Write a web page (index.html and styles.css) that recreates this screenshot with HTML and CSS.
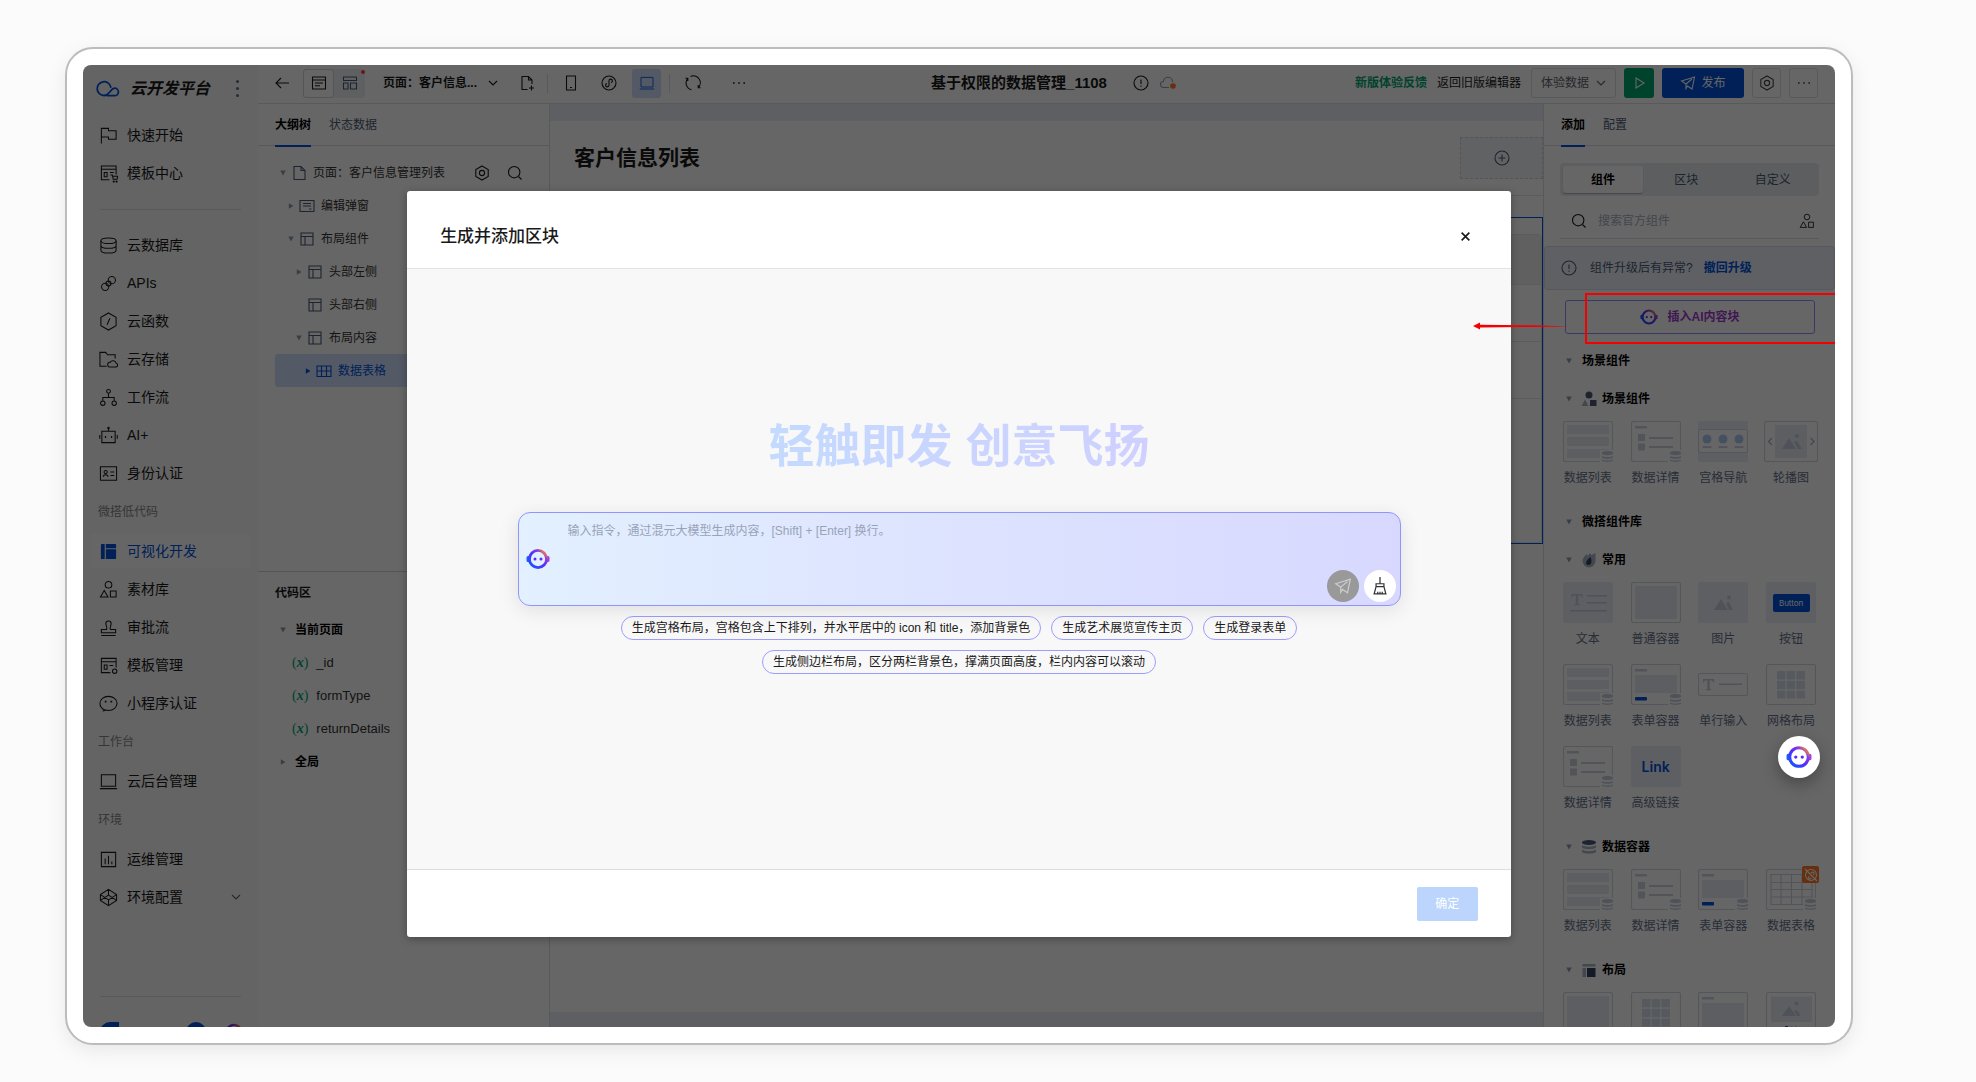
FILE: index.html
```html
<!DOCTYPE html>
<html lang="zh-CN">
<head>
<meta charset="utf-8">
<meta name="viewport" content="width=device-width, initial-scale=1">
<title>云开发平台</title>
<link rel="stylesheet" href="styles.css">
</head>
<body>
<svg class="sprite" width="0" height="0" aria-hidden="true">
  <defs>
    <linearGradient id="bot-g" x1="0" y1="1" x2="1" y2="0">
      <stop offset="0" stop-color="#0a5cff"/><stop offset=".5" stop-color="#5a2bff"/><stop offset=".75" stop-color="#8a3fe0"/><stop offset=".85" stop-color="#e0705a"/><stop offset="1" stop-color="#c04ad0"/>
    </linearGradient>
  </defs>
  <symbol id="bot" viewBox="0 0 24 24"><g stroke="none"><path d="M2 9h2.500v6H2a1.500 1.500 0 0 1-1.500-1.500v-3A1.500 1.500 0 0 1 2 9z" fill="#1f5cff"/><path d="M22 9h-2.500v6H22a1.500 1.500 0 0 0 1.500-1.500v-3A1.500 1.500 0 0 0 22 9z" fill="#a040e0"/><circle cx="9" cy="12" r="1.500" fill="#5a2bff"/><circle cx="15" cy="12" r="1.500" fill="#5a2bff"/></g><circle cx="12" cy="12" r="8.600" fill="none" stroke="url(#bot-g)" stroke-width="2.800"/></symbol>
  <symbol id="logo" viewBox="0 0 24 18"><path d="M14.800 7A6.900 6.900 0 1 0 8 15.500c3 0 4.600-2 6-3.800s2.500-3.500 4.700-3.500a3.700 3.700 0 0 1 0 7.400H11" fill="none" stroke="#0052d9" stroke-width="1.800" stroke-linecap="round"/></symbol>
  <symbol id="flag" viewBox="0 0 20 20"><path d="M2.500 18.500V2.500h7.500v2.500h8v9h-8V11.500H2.500"/></symbol>
  <symbol id="tpl-cart" viewBox="0 0 20 20"><path d="M11 16.500H2.500V2h15.500v9M2.500 5.500H18M5.500 9h3v4.500h-3zM11.500 9h4M12 11.500h2l1 4.500h4l.8-3h-5.500"/><circle cx="15.500" cy="18.500" r=".6"/><circle cx="18.500" cy="18.500" r=".6"/></symbol>
  <symbol id="db" viewBox="0 0 20 20"><ellipse cx="10" cy="5" rx="8" ry="3"/><path d="M2 5v10c0 1.700 3.600 3 8 3s8-1.300 8-3V5M2 10c0 1.700 3.600 3 8 3s8-1.300 8-3"/></symbol>
  <symbol id="api" viewBox="0 0 20 20"><circle cx="6.500" cy="13.500" r="3.800"/><circle cx="13.500" cy="6.500" r="3.800"/><circle cx="10" cy="10" r="2.600"/></symbol>
  <symbol id="fn" viewBox="0 0 20 20"><path d="M10 1l8 4.500v9L10 19l-8-4.500v-9zM11.500 6.500l-3 7"/></symbol>
  <symbol id="store" viewBox="0 0 20 20"><path d="M8 17H1V2.500h6L9 5h8v4M11.500 18a2.500 2.500 0 0 1 .2-5 3.500 3.500 0 0 1 6.300.8 2.200 2.200 0 0 1 0 4.200z"/></symbol>
  <symbol id="flow" viewBox="0 0 20 20"><circle cx="10" cy="3.500" r="2"/><circle cx="4" cy="16" r="2.300"/><circle cx="16" cy="16" r="2.300"/><path d="M10 5.500V10M4 13.500V10h12v3.500"/></symbol>
  <symbol id="robot" viewBox="0 0 20 20"><path d="M3 5.500h14v12H3zM10 5.500v-3M.8 9.500v4M19.200 9.500v4"/><circle cx="10" cy="2.200" r=".8"/><path d="M6.800 10.500v2M13.200 10.500v2M6.200 11.500h1.400M12.600 11.500h1.400"/></symbol>
  <symbol id="idcard" viewBox="0 0 20 20"><path d="M1.500 3h17v14h-17zM4.500 13.500c0-3 5-3 5 0M12 8.500h4M12 12h4"/><circle cx="7" cy="8.500" r="1.700"/></symbol>
  <symbol id="shapes" viewBox="0 0 20 20"><circle cx="10" cy="5" r="3.500"/><path d="M5.500 11l4 7h-8zM12 11.500h6v6.500h-6z"/></symbol>
  <symbol id="stamp" viewBox="0 0 20 20"><path d="M2.500 18.500h15M2.500 15.500v-3.500h5.500c1-2-.8-4-.8-6a2.800 2.800 0 0 1 5.600 0c0 2-1.800 4-.8 6h5.500v3.500z"/></symbol>
  <symbol id="tpl" viewBox="0 0 20 20"><path d="M12 17.500H2.500V2.500h15.500V12M2.500 6H18M5.500 9.500h3V14h-3zM11 10h4"/><circle cx="16.500" cy="16" r="2.300"/></symbol>
  <symbol id="mini" viewBox="0 0 20 20"><path d="M4 18c1 0 1.700-.5 2-1.200-3-1.200-5-4-5-7C1 5.500 5 2.500 10 2.500s9 3.200 9 7.300-4 7.500-9 7.500c-1 0-2-.1-3-.4z"/><path d="M7 7v2M13 7v2" stroke-width="1.800"/></symbol>
  <symbol id="laptop" viewBox="0 0 20 20"><path d="M2.500 3h15v12h-15zM1 17.500h18"/></symbol>
  <symbol id="chart" viewBox="0 0 20 20"><path d="M2.500 2.500h15v15h-15zM6.500 9v6M10 6v9M13.500 12v3"/></symbol>
  <symbol id="cube" viewBox="0 0 20 20"><path d="M10 1.500l8.500 5.500v6L10 18.500 1.500 13V7zM1.500 7L10 12.500 18.500 7M1.500 13L10 7.500l8.500 5.500M10 1.500v6M10 12.500v6"/></symbol>
  <symbol id="grid-fill" viewBox="0 0 20 20"><path d="M3 2h3v16H3a1 1 0 0 1-1-1V3a1 1 0 0 1 1-1zM7.200 2H17a1 1 0 0 1 1 1v3.500H7.200zM7.200 7.700H18V17a1 1 0 0 1-1 1H7.200z" fill="currentColor" stroke="none"/></symbol>
  <symbol id="chev" viewBox="0 0 10 10"><path d="M1 3l4 4 4-4"/></symbol>
  <symbol id="back" viewBox="0 0 16 16"><path d="M15 8H1.500M7 3L2 8l5 5"/></symbol>
  <symbol id="doc" viewBox="0 0 16 16"><path d="M3 1.500h7l4 4v9H3zM10 1.500v4h4"/></symbol>
  <symbol id="doc-add" viewBox="0 0 16 16"><path d="M8.500 14.500H3v-13h6.500L13 5v4M9.500 1.500V5H13M12.500 10.500v5M10 13h5"/></symbol>
  <symbol id="form" viewBox="0 0 16 16"><path d="M1.500 2h13v12h-13zM1.500 5h13M4 8h8M4 10.800h5"/></symbol>
  <symbol id="blocks" viewBox="0 0 16 16"><path d="M1.500 2h13v3.500h-13zM1.500 8h4.500v6H1.500zM8.500 8h6v6h-6z"/></symbol>
  <symbol id="phone" viewBox="0 0 16 16"><path d="M3.500 1h9v14h-9zM7 12.500h2"/></symbol>
  <symbol id="wxmini" viewBox="0 0 16 16"><circle cx="8" cy="8" r="7"/><path d="M6 8.500a1.700 1.700 0 1 0 2 1.700V5.800A1.700 1.700 0 1 1 10 7.500"/></symbol>
  <symbol id="refresh" viewBox="0 0 16 16"><path d="M2.800 3.400A6.900 6.900 0 0 0 6.500 14.700M5.500 1.500A6.900 6.900 0 0 1 13.400 12.500M2.800 6V3.200H.5M13.200 10v2.800h2.300"/></symbol>
  <symbol id="dots" viewBox="0 0 16 16"><path d="M2 7.200h1.600v1.600H2zM7.200 7.200h1.600v1.600H7.200zM12.400 7.200H14v1.600h-1.600z" fill="currentColor" stroke="none"/></symbol>
  <symbol id="info" viewBox="0 0 16 16"><circle cx="8" cy="8" r="7"/><path d="M8 4.500v4.500M8 10.500v1.200"/></symbol>
  <symbol id="cloud" viewBox="0 0 18 16"><path d="M10 12.500H4.500a3 3 0 0 1 0-6 4.500 4.500 0 0 1 9 .5" /><circle cx="14" cy="11" r="2.800" fill="#ff7828" stroke="none"/></symbol>
  <symbol id="play" viewBox="0 0 16 16"><path d="M5 3l8 5-8 5z"/></symbol>
  <symbol id="send" viewBox="0 0 16 16"><path d="M1.500 6L14.500 2l-2.500 12-4.500-3-1.500 2.500V9zM6 9l6-5"/></symbol>
  <symbol id="hex" viewBox="0 0 16 16"><path d="M8 1l6.200 3.500v7L8 15l-6.200-3.500v-7z"/><circle cx="8" cy="8" r="2.600"/></symbol>
  <symbol id="search" viewBox="0 0 16 16"><circle cx="7.200" cy="7.200" r="5.700"/><path d="M11.500 11.500l3 3"/></symbol>
  <symbol id="plus-c" viewBox="0 0 16 16"><circle cx="8" cy="8" r="7"/><path d="M8 4.500v7M4.500 8h7"/></symbol>
  <symbol id="dialog" viewBox="0 0 16 16"><path d="M1 2.500h14v11H1zM4 5.500h8M4 8h8M10 11h2.500"/></symbol>
  <symbol id="layout" viewBox="0 0 16 16"><path d="M2 2h12v12H2zM2 5.500h12M6 5.500V14"/></symbol>
  <symbol id="table" viewBox="0 0 16 16"><path d="M1 3h14v10.500H1zM1 8h14M5.500 3v10.500M10.500 3v10.500"/></symbol>
  <symbol id="down" viewBox="0 0 8 8"><path d="M1.200 1.500h5.600L4 6.500z" fill="#8f9bb0" stroke="none"/></symbol>
  <symbol id="right" viewBox="0 0 8 8"><path d="M1.800 1.200v5.600L6.500 4z" fill="#8f9bb0" stroke="none"/></symbol>
  <symbol id="right-on" viewBox="0 0 8 8"><path d="M1.800 1.200v5.600L6.500 4z" fill="#0052d9" stroke="none"/></symbol>
  <symbol id="x" viewBox="0 0 10 10"><path d="M1.500 1.500l7 7M8.500 1.500l-7 7"/></symbol>
  <symbol id="broom" viewBox="0 0 16 16"><path d="M8 0v6M4.500 6h7v2.500h-7zM4.500 8.500L2.800 15h10.400l-1.700-6.500M6 15v-2M8 15v-2M10 15v-2"/></symbol>
  <symbol id="c-scene" viewBox="0 0 16 16"><circle cx="8" cy="4" r="3.500" fill="#4a5a78"/><path d="M4 8.500L7.500 15H.5z" fill="#a9b4c6"/><path d="M9 9h6.500v6H9z" fill="#4a5a78"/></symbol>
  <symbol id="c-hot" viewBox="0 0 16 16"><path d="M14.500 1v8a6.500 6.500 0 1 1-13 0C1.500 6 4 4 5.500 2l1 2L9 1l1.500 2z" fill="#a9b4c6"/><path d="M9.500 5C11 8 11 13 7.500 13S4 9 9.500 5z" fill="#33415f"/></symbol>
  <symbol id="c-data" viewBox="0 0 16 16"><ellipse cx="8" cy="3.500" rx="7" ry="2.500" fill="#4a5a78"/><path d="M1 6c2 2.200 12 2.200 14 0v2.500c-2 2.200-12 2.200-14 0zM1 10.500c2 2.200 12 2.200 14 0V13c-2 2.200-12 2.200-14 0z" fill="#a9b4c6"/></symbol>
  <symbol id="c-layout" viewBox="0 0 16 16"><path d="M1.500 2h13v2.500h-13zM1.500 6H5v9H1.500z" fill="#a9b4c6"/><path d="M6 6h8.500v9H6z" fill="#33415f"/></symbol>

  <symbol id="t-db" viewBox="0 0 50 41"><path d="M37 29h14v13H37z" fill="#fff"/><path d="M39 31.500c0-2 11-2 11 0v1.500c-2 1.500-9 1.500-11 0zM39 35c2 1.300 9 1.300 11 0v1.800c-2 1.400-9 1.400-11 0zM39 38.500c2 1.300 9 1.300 11 0v1.300c-2 1.500-9 1.500-11 0z" fill="#c6cedb"/></symbol>
  <symbol id="t-box" viewBox="0 0 50 41"><rect x=".5" y=".5" width="49" height="40" rx="2" fill="#fff" stroke="#d3d8e0"/></symbol>
  <symbol id="t-list" viewBox="0 0 50 41"><use href="#t-box"/><path d="M4 4h42v9H4zM4 16h42v9H4zM4 28h42v9H4z" fill="#e8ecf2"/><use href="#t-db"/></symbol>
  <symbol id="t-detail" viewBox="0 0 50 41"><use href="#t-box"/><path d="M4 5h12v2.500H4zM7 13h7v7H7zM7 22.500h7v7H7zM18 16h24v2H18zM18 25h24v2H18z" fill="#ccd3e0"/><use href="#t-db"/></symbol>
  <symbol id="t-nav" viewBox="0 0 50 41"><rect width="50" height="41" rx="2" fill="#e9edf4"/><rect x=".5" y="8.500" width="49" height="23" rx="2" fill="#fff" stroke="#d3d8e0"/><g fill="#a9cbf8"><circle cx="9" cy="18" r="4.500"/><circle cx="25" cy="18" r="4.500"/><circle cx="41" cy="18" r="4.500"/></g><path d="M4.500 25h9v2h-9zM20.500 25h9v2h-9zM36.500 25h9v2h-9z" fill="#ccd3e0"/></symbol>
  <symbol id="t-swipe" viewBox="0 0 54 41"><rect x=".5" y=".5" width="53" height="40" rx="2" fill="#fff" stroke="#d3d8e0"/><path d="M11 4h32v33H11z" fill="#e8ecf2"/><path d="M18 28l7-11 7 11zM30 21l3-1 5 8h-4z" fill="#c6cedb"/><circle cx="33" cy="15" r="2" fill="#c6cedb"/><path d="M8 17l-3.500 3.500L8 24M46.500 17l3.500 3.500-3.500 3.500" fill="none" stroke="#a9b4c6" stroke-width="1.300"/></symbol>
  <symbol id="t-text" viewBox="0 0 50 41"><rect width="50" height="41" rx="2" fill="#e9edf4"/><path d="M8.500 12h11v3.500h-1c0-1.500-.8-2.300-3.300-2.300V22h1.500v1.200h-5.400V22h1.500v-8.800c-2.500 0-3.300.8-3.300 2.300h-1zM24 13h20v1.600H24zM24 20h20v1.600H24zM7 28h37v1.600H7z" fill="#c6cedb"/></symbol>
  <symbol id="t-cont" viewBox="0 0 50 41"><use href="#t-box"/><path d="M4 4h42v33H4z" fill="#e8ecf2"/></symbol>
  <symbol id="t-img" viewBox="0 0 50 41"><rect width="50" height="41" rx="2" fill="#e9edf4"/><path d="M16 28l7-11 7 11zM28 21l3-1 4 8h-4z" fill="#c6cedb"/><circle cx="31" cy="15.500" r="2" fill="#c6cedb"/></symbol>
  <symbol id="t-form" viewBox="0 0 50 41"><use href="#t-box"/><path d="M4 5h12v2.500H4z" fill="#ccd3e0"/><path d="M4 11h42v18H4z" fill="#e8ecf2"/><rect x="4" y="33" width="12" height="3.500" rx="1" fill="#0052d9"/><use href="#t-db"/></symbol>
  <symbol id="t-input" viewBox="0 0 50 41"><rect x=".5" y="9.500" width="49" height="22" rx="2" fill="#fff" stroke="#d3d8e0"/><path d="M5 15h11v3.500h-1c0-1.500-.8-2.300-3.300-2.300V25h1.500v1.200H7.800V25h1.500v-8.800c-2.500 0-3.300.8-3.300 2.300H5zM21 19.500h23v1.600H21z" fill="#c6cedb"/></symbol>
  <symbol id="t-grid" viewBox="0 0 50 41"><use href="#t-box"/><path d="M11 7h8.500v8.500H11zM20.700 7h8.500v8.500h-8.500zM30.400 7h8.500v8.500h-8.500zM11 16.700h8.500v8.500H11zM20.700 16.700h8.500v8.500h-8.500zM30.400 16.700h8.500v8.500h-8.500zM11 26.400h8.500v8H11zM20.700 26.400h8.500v8h-8.500zM30.400 26.400h8.500v8h-8.500z" fill="#d7dfea"/></symbol>
  <symbol id="t-table" viewBox="0 0 50 41"><use href="#t-box"/><path d="M5 5.500h41v30H5zM5 13.500h41M5 20.500h41M5 28h41M15 5.500v30M25.500 5.500v30M36 5.500v30" fill="none" stroke="#ccd3e0"/><use href="#t-db"/></symbol>
  <symbol id="t-card" viewBox="0 0 50 41"><use href="#t-box"/><path d="M4 5h12v2.500H4z" fill="#ccd3e0"/><path d="M4 11h42v30H4z" fill="#e8ecf2"/></symbol>
  <symbol id="t-banner" viewBox="0 0 50 41"><use href="#t-box"/><path d="M5 4.500h41V30H5z" fill="#e8ecf2"/><path d="M16 24l7-10 7 10zM28 19l3-1 4 6h-4z" fill="#c6cedb"/><circle cx="30.500" cy="11.500" r="2" fill="#c6cedb"/><path d="M19 34h3v3h-3z" fill="#0052d9"/><path d="M24.500 34h2v2h-2zM29 34h2v2h-2z" fill="#ccd3e0"/></symbol>
</svg>

<div class="frame">
<div class="screen">

  <nav class="side">
    <div class="brand"><svg class="logo"><use href="#logo"/></svg><strong>云开发平台</strong><button class="kebab" aria-label="更多"><i></i><i></i><i></i></button></div>
    <a class="nav" href="#"><svg><use href="#flag"/></svg>快速开始</a>
    <a class="nav" href="#"><svg><use href="#tpl-cart"/></svg>模板中心</a>
    <hr>
    <a class="nav" href="#"><svg><use href="#db"/></svg>云数据库</a>
    <a class="nav" href="#"><svg><use href="#api"/></svg>APIs</a>
    <a class="nav" href="#"><svg><use href="#fn"/></svg>云函数</a>
    <a class="nav" href="#"><svg><use href="#store"/></svg>云存储</a>
    <a class="nav" href="#"><svg><use href="#flow"/></svg>工作流</a>
    <a class="nav" href="#"><svg><use href="#robot"/></svg>AI+</a>
    <a class="nav" href="#"><svg><use href="#idcard"/></svg>身份认证</a>
    <div class="group">微搭低代码</div>
    <a class="nav on" href="#"><svg><use href="#grid-fill"/></svg>可视化开发</a>
    <a class="nav" href="#"><svg><use href="#shapes"/></svg>素材库</a>
    <a class="nav" href="#"><svg><use href="#stamp"/></svg>审批流</a>
    <a class="nav" href="#"><svg><use href="#tpl"/></svg>模板管理</a>
    <a class="nav" href="#"><svg><use href="#mini"/></svg>小程序认证</a>
    <div class="group">工作台</div>
    <a class="nav" href="#"><svg><use href="#laptop"/></svg>云后台管理</a>
    <div class="group">环境</div>
    <a class="nav" href="#"><svg><use href="#chart"/></svg>运维管理</a>
    <a class="nav" href="#"><svg><use href="#cube"/></svg>环境配置<svg class="more"><use href="#chev"/></svg></a>
    <div class="side-foot"><span class="leaf"></span><span class="ball"></span><svg><use href="#bot"/></svg></div>
  </nav>

  <div class="main">
    <header class="top">
      <div class="tools">
        <button class="plain" aria-label="返回"><svg><use href="#back"/></svg></button>
        <div class="views"><button class="on" aria-label="编辑视图"><svg><use href="#form"/></svg></button><button aria-label="布局视图"><svg><use href="#blocks"/></svg></button></div>
        <button class="page-pick">页面：客户信息...<svg class="tiny"><use href="#chev"/></svg></button>
        <button class="plain" aria-label="新建页面"><svg><use href="#doc-add"/></svg></button>
        <span class="bar"></span>
        <button class="device" aria-label="手机"><svg><use href="#phone"/></svg></button>
        <button class="device" aria-label="小程序"><svg><use href="#wxmini"/></svg></button>
        <button class="device on" aria-label="电脑"><svg><use href="#laptop"/></svg></button>
        <span class="bar"></span>
        <button class="device" aria-label="刷新"><svg><use href="#refresh"/></svg></button>
        <button class="device wide" aria-label="更多"><svg><use href="#dots"/></svg></button>
      </div>
      <div class="app-name"><strong>基于权限的数据管理_1108</strong><svg><use href="#info"/></svg><svg class="cloud"><use href="#cloud"/></svg></div>
      <div class="acts">
        <a class="green" href="#">新版体验反馈</a><a href="#">返回旧版编辑器</a>
        <button class="sel">体验数据<svg class="tiny"><use href="#chev"/></svg></button>
        <button class="run" aria-label="预览"><svg><use href="#play"/></svg></button>
        <button class="publish"><svg><use href="#send"/></svg>发布</button>
        <button class="sq" aria-label="设置"><svg><use href="#hex"/></svg></button>
        <button class="sq" aria-label="更多"><svg><use href="#dots"/></svg></button>
      </div>
    </header>

    <div class="work">
      <aside class="outline">
        <div class="tabs"><button class="on">大纲树</button><button>状态数据</button></div>
        <div class="tree">
          <div class="row"><svg class="tri"><use href="#down"/></svg><svg><use href="#doc"/></svg>页面：客户信息管理列表<span class="row-tools"><svg><use href="#hex"/></svg><svg><use href="#search"/></svg></span></div>
          <div class="row l1"><svg class="tri"><use href="#right"/></svg><svg><use href="#dialog"/></svg>编辑弹窗</div>
          <div class="row l1"><svg class="tri"><use href="#down"/></svg><svg><use href="#layout"/></svg>布局组件</div>
          <div class="row l2"><svg class="tri"><use href="#right"/></svg><svg><use href="#layout"/></svg>头部左侧</div>
          <div class="row l2"><svg class="tri"></svg><svg><use href="#layout"/></svg>头部右侧</div>
          <div class="row l2"><svg class="tri"><use href="#down"/></svg><svg><use href="#layout"/></svg>布局内容</div>
          <div class="row l3 on"><svg class="tri"><use href="#right-on"/></svg><svg><use href="#table"/></svg>数据表格</div>
        </div>
        <div class="code">
          <h2>代码区</h2>
          <div class="row head"><svg class="tri"><use href="#down"/></svg>当前页面</div>
          <div class="row var"><i>(<em>x</em>)</i>_id</div>
          <div class="row var"><i>(<em>x</em>)</i>formType</div>
          <div class="row var"><i>(<em>x</em>)</i>returnDetails</div>
          <div class="row head"><svg class="tri"><use href="#right"/></svg>全局</div>
        </div>
      </aside>

      <main class="canvas">
        <div class="sheet">
          <div class="sheet-head"><h1>客户信息列表</h1><button class="slot" aria-label="添加组件"><svg><use href="#plus-c"/></svg></button></div>
          <div class="picked"><div class="grid-view"><div class="gh"></div><div class="gr"></div><div class="gr"></div></div></div>
        </div>
      </main>

      <aside class="lib">
        <div class="tabs"><button class="on">添加</button><button>配置</button></div>
        <div class="seg"><button class="on">组件</button><button>区块</button><button>自定义</button></div>
        <label class="find"><svg><use href="#search"/></svg><input type="text" placeholder="搜索官方组件" aria-label="搜索官方组件"><svg><use href="#shapes"/></svg></label>
        <div class="tip"><svg><use href="#info"/></svg>组件升级后有异常?<a href="#">撤回升级</a></div>
        <button class="ai-add"><svg><use href="#bot"/></svg><span>插入AI内容块</span></button>

        <h3><svg class="tri"><use href="#down"/></svg>场景组件</h3>
        <h3><svg class="tri"><use href="#down"/></svg><svg class="cat"><use href="#c-scene"/></svg>场景组件</h3>
        <div class="cells">
          <div><svg><use href="#t-list"/></svg>数据列表</div>
          <div><svg><use href="#t-detail"/></svg>数据详情</div>
          <div><svg><use href="#t-nav"/></svg>宫格导航</div>
          <div><svg class="broad"><use href="#t-swipe"/></svg>轮播图</div>
        </div>
        <h3><svg class="tri"><use href="#down"/></svg>微搭组件库</h3>
        <h3><svg class="tri"><use href="#down"/></svg><svg class="cat"><use href="#c-hot"/></svg>常用</h3>
        <div class="cells">
          <div><svg><use href="#t-text"/></svg>文本</div>
          <div><svg><use href="#t-cont"/></svg>普通容器</div>
          <div><svg><use href="#t-img"/></svg>图片</div>
          <div><span class="demo"><b>Button</b></span>按钮</div>
          <div><svg><use href="#t-list"/></svg>数据列表</div>
          <div><svg><use href="#t-form"/></svg>表单容器</div>
          <div><svg><use href="#t-input"/></svg>单行输入</div>
          <div><svg><use href="#t-grid"/></svg>网格布局</div>
          <div><svg><use href="#t-detail"/></svg>数据详情</div>
          <div><span class="demo link">Link</span>高级链接</div>
        </div>
        <h3><svg class="tri"><use href="#down"/></svg><svg class="cat"><use href="#c-data"/></svg>数据容器</h3>
        <div class="cells">
          <div><svg><use href="#t-list"/></svg>数据列表</div>
          <div><svg><use href="#t-detail"/></svg>数据详情</div>
          <div><svg><use href="#t-form"/></svg>表单容器</div>
          <div class="tagged"><svg><use href="#t-table"/></svg>数据表格<span class="tag"><svg viewBox="0 0 16 16"><circle cx="8" cy="8" r="5.500"/><path d="M2 2l12 12M6.500 9.500a1.300 1.300 0 1 0 1.500 1M8 6.500a1.500 1.500 0 1 1 2 1.500"/></svg></span></div>
        </div>
        <h3><svg class="tri"><use href="#down"/></svg><svg class="cat"><use href="#c-layout"/></svg>布局</h3>
        <div class="cells">
          <div><svg><use href="#t-cont"/></svg></div>
          <div><svg><use href="#t-grid"/></svg></div>
          <div><svg><use href="#t-card"/></svg></div>
          <div><svg><use href="#t-banner"/></svg></div>
        </div>
      </aside>
    </div>
  </div>

  <div class="mask">
    <section class="modal" role="dialog" aria-labelledby="dlg-title">
      <header><h2 id="dlg-title">生成并添加区块</h2><button aria-label="关闭"><svg><use href="#x"/></svg></button></header>
      <div class="modal-body">
        <p class="slogan">轻触即发 创意飞扬</p>
        <div class="prompt">
          <svg class="bot"><use href="#bot"/></svg>
          <textarea aria-label="输入指令" placeholder="输入指令，通过混元大模型生成内容，[Shift] + [Enter] 换行。"></textarea>
          <div class="prompt-acts"><button class="send" aria-label="发送"><svg><use href="#send"/></svg></button><button aria-label="清空"><svg><use href="#broom"/></svg></button></div>
        </div>
        <div class="pills">
          <button>生成宫格布局，宫格包含上下排列，并水平居中的 icon 和 title，添加背景色</button>
          <button>生成艺术展览宣传主页</button>
          <button>生成登录表单</button>
          <button>生成侧边栏布局，区分两栏背景色，撑满页面高度，栏内内容可以滚动</button>
        </div>
      </div>
      <footer><button disabled>确定</button></footer>
    </section>
  </div>

  <div class="mark"></div>
  <svg class="arrow" viewBox="0 0 100 10"><path d="M0 5L7 1.500V3.800L60 4.200 98 5.600 60 6 7 6.500V8.500z" fill="#f50000"/></svg>
  <button class="fab" aria-label="AI 助手"><svg><use href="#bot"/></svg></button>
</div>
</div>
</body>
</html>
```
FILE: styles.css
```css
* { box-sizing: border-box; }
body {
  margin: 0;
  height: 100vh;
  min-height: 640px;
  display: flex;
  padding: 47px 123px 37px 65px;
  background: #fbfbfb;
  color: #1a1a1a;
  font: 12px/20px "Liberation Sans", "Noto Sans CJK SC", sans-serif;
}
button, input, textarea { font: inherit; color: inherit; }
button { border: 0; padding: 0; background: none; display: inline-flex; align-items: center; justify-content: center; white-space: nowrap; }
a { color: inherit; text-decoration: none; }
h1, h2, h3, p { margin: 0; font-size: inherit; font-weight: bold; }
svg { width: 16px; height: 16px; flex: none; fill: none; stroke: currentColor; stroke-width: 1.1; }
.sprite { position: absolute; width: 0; height: 0; }

.frame {
  flex: 1;
  min-width: 0;
  display: flex;
  padding: 16px;
  border: 2px solid #bcbcbc;
  border-radius: 28px;
  background: #fff;
  box-shadow: 0 6px 20px rgba(0, 0, 0, .08);
}
.screen { position: relative; flex: 1; min-width: 0; display: flex; overflow: hidden; border-radius: 8px; background: #fff; }

/* product navigation */
.side { width: 175px; flex: none; overflow: hidden; background: #f9f9f9; font-size: 14px; }
.brand { display: flex; align-items: center; height: 53px; padding: 0 19px 6px 13px; }
.brand strong { margin-left: 10px; font-size: 16px; font-style: italic; }
.logo { width: 24px; height: 18px; }
.kebab { margin-left: auto; flex-direction: column; gap: 4px; }
.kebab i { width: 3px; height: 3px; border-radius: 50%; background: #63718c; }
.nav { display: flex; align-items: center; gap: 9px; height: 34px; margin: 0 8px 4px; padding-left: 8px; border-radius: 3px; }
.nav svg { width: 19px; height: 19px; }
.nav.on { background: #fff; color: #0052d9; }
.nav .more { width: 10px; height: 10px; margin: 0 9px 0 auto; color: #666; }
.side hr { height: 1px; margin: 19px 17px 18px; border: 0; background: #dedede; }
.group { height: 38px; padding: 8px 15px; margin-bottom: 2px; font-size: 12px; color: #888; }
.side-foot { display: flex; margin: 82px 17px 0; padding-top: 25px; border-top: 1px solid #dedede; }
.side-foot svg { width: 20px; height: 20px; margin-left: 18px; }
.leaf { flex: none; width: 19px; height: 19px; border-radius: 10px 0 10px 0; background: #0052d9; }
.ball { flex: none; width: 20px; height: 20px; margin-left: 67px; border-radius: 50%; background: #0052d9; }

/* editor */
.main { flex: 1; min-width: 0; display: flex; flex-direction: column; }
.top { display: flex; justify-content: space-between; align-items: center; height: 39px; flex: none; padding: 0 17px 2px 15px; border-bottom: 1px solid #dcdfe5; }
.tools, .app-name, .acts { display: flex; align-items: center; }
.plain { width: 17px; height: 29px; }
.views { position: relative; display: flex; margin: 0 18px 0 13px; border-radius: 3px; background: #eef1f6; color: #4b5b76; }
.views button { width: 31px; height: 29px; border: 1px solid transparent; border-radius: 3px; }
.views .on { border-color: #cfd5df; background: #fff; color: #1a1a1a; }
.views::after { content: ""; position: absolute; top: 1px; right: 0; width: 4px; height: 4px; border-radius: 50%; background: #f64041; }
.page-pick { gap: 11px; margin-right: 20px; font-weight: bold; }
.tiny { width: 10px; height: 10px; }
.bar { width: 1px; height: 19px; margin: 0 8px; background: #dcdfe5; }
.plain + .bar { margin-left: 12px; }
.device { width: 29px; height: 29px; margin-right: 9px; border-radius: 3px; }
.device.on { margin-right: 0; background: #cfe0ff; color: #0052d9; }
.device.wide { margin: 0 0 0 8px; }
.app-name strong { margin-right: 26px; font-size: 15px; }
.app-name .cloud { width: 18px; margin-left: 10px; color: #8f9bb0; }
.acts { gap: 8px; }
.green { margin-right: 2px; font-weight: bold; color: #00a870; }
.sel { gap: 7px; width: 85px; height: 30px; margin-left: 2px; border: 1px solid #dcdfe5; border-radius: 3px; color: #63656b; }
.run { width: 30px; height: 30px; border-radius: 3px; background: #00a870; color: #fff; }
.publish { gap: 5px; width: 82px; height: 30px; border-radius: 3px; background: #0052d9; color: #fff; }
.sq { width: 29px; height: 30px; border: 1px solid #dcdfe5; border-radius: 3px; color: #444; }

.work { flex: 1; min-height: 0; display: flex; }
.tabs { display: flex; gap: 18px; height: 42px; flex: none; padding-left: 17px; border-bottom: 1px solid #dcdfe5; }
.tabs button { height: 43px; border-bottom: 2px solid transparent; color: #4b5b76; }
.tabs .on { border-color: #0052d9; color: #000; font-weight: bold; }

.outline { width: 292px; flex: none; display: flex; flex-direction: column; border-right: 1px solid #dcdfe5; }
.tree { flex: 14 0 0; min-height: 0; overflow: hidden; padding: 10px 0 0 17px; }
.row { display: flex; align-items: center; height: 33px; gap: 6px; color: #333; border-radius: 3px 0 0 3px; white-space: nowrap; }
.row svg { color: #4b5b76; }
.row > svg:nth-child(2) { margin-left: -6px; }
.tri { width: 16px; height: 8px; }
.l1 { padding-left: 8px; }
.l2 { padding-left: 16px; }
.l3 { padding-left: 25px; }
.row.on { background: #cfe0ff; color: #0052d9; }
.row.on svg { color: #0052d9; }
.row-tools { display: flex; gap: 17px; margin-left: auto; padding-right: 26px; }
.row-tools svg { color: #1a1a1a; }
.code { flex: 15 0 0; min-height: 0; overflow: hidden; padding: 11px 0 0 17px; border-top: 1px solid #cfd5df; }
.code h2 { margin-bottom: 11px; }
.head { font-weight: bold; color: #000; gap: 4px; }
.var { padding-left: 17px; gap: 8px; font-size: 13px; }
.var i { font: 14px/20px "Liberation Serif", serif; color: #00a870; }
.var em { font-style: italic; font-weight: bold; }

.canvas { flex: 1; min-width: 0; padding: 17px 0 15px; background: #e9eef5; }
.sheet { height: 100%; overflow: hidden; background: #fff; }
.sheet-head { display: flex; justify-content: space-between; align-items: center; height: 75px; padding-left: 24px; border-bottom: 1px solid #e4e6ea; }
.sheet-head h1 { font-size: 21px; line-height: 30px; }
.slot { width: 83px; height: 42px; border: 1px dashed #cfd5df; background: #f2f5fa; color: #4b5b76; }
.picked { height: 327px; margin: 21px 0 0 24px; padding-top: 16px; border: 1px solid #0052d9; }
.grid-view { height: 100%; border: 1px solid #e4e6ea; border-radius: 4px; }
.gh { height: 50px; background: #f1f1f1; }
.gh, .gr { border-bottom: 1px solid #e4e6ea; }
.gr { height: 57px; }

.lib { width: 292px; flex: none; overflow: hidden; border-left: 1px solid #dcdfe5; }
.lib .tabs { padding-left: 17px; }
.seg { display: grid; grid-template-columns: 80px 1fr 1fr; margin: 17px 16px 0; padding: 3px; border-radius: 4px; background: #e6eaf0; color: #4b5b76; }
.seg button { height: 27px; border-radius: 3px; }
.seg .on { background: #fff; color: #000; font-weight: bold; box-shadow: 0 1px 1px rgba(0, 0, 0, .25); }
.find { display: flex; align-items: center; gap: 11px; height: 43px; margin: 0 16px; padding: 7px 4px 0 11px; border-bottom: 1px solid #dcdfe5; }
.find input { flex: 1; min-width: 0; padding: 0; border: 0; outline: 0; background: none; }
.find input::placeholder { color: #a6afc0; opacity: 1; }
.tip { display: flex; align-items: center; height: 44px; margin-top: 7px; padding-left: 16px; border: 1px solid #d5deed; border-radius: 3px; background: #ebf1fb; color: #4b5b76; }
.tip svg { margin-right: 13px; }
.tip a { margin-left: 11px; font-weight: bold; color: #0052d9; }
.ai-add { display: flex; gap: 9px; width: 250px; height: 34px; margin: 10px 0 8px 21px; border: 1px solid #8f90ff; border-radius: 3px; color: #a23bd0; font-weight: bold; }
.ai-add svg { width: 18px; height: 18px; }
.lib h3 { display: flex; align-items: center; height: 38px; padding-left: 17px; gap: 5px; color: #000; }
.cells { display: grid; grid-template-columns: repeat(4, 1fr); row-gap: 15px; padding: 3px 10px 15px; color: #63718c; text-align: center; }
.cells > div { position: relative; display: flex; flex-direction: column; align-items: center; gap: 6px; }
.cells > div > svg { width: 50px; height: 41px; stroke: none; }
.cells > div > .broad { width: 54px; }
.demo { display: grid; place-items: center; width: 50px; height: 41px; border-radius: 2px; background: #e9edf4; }
.demo b { width: 37px; border-radius: 2px; background: #0052d9; color: #fff; font: 8px/18px Inter, sans-serif; }
.link { color: #0052d9; font: 600 14px/20px Inter, sans-serif; }
.tag { position: absolute; top: -3px; right: 6px; display: grid; width: 17px; height: 17px; place-items: center; border-radius: 2px; background: #ff7828; color: #fff; }
.cat { margin-left: -1px; stroke: none; }

/* dialog over the editor */
.mask { position: absolute; inset: 0; display: flex; justify-content: center; align-items: flex-start; padding-top: 126px; background: rgba(0, 0, 0, .6); }
.modal { width: 63%; border-radius: 3px; background: #fff; box-shadow: 0 2px 8px rgba(0, 0, 0, .3); }
.modal header { display: flex; align-items: center; justify-content: space-between; height: 78px; padding: 14px 40px 0 33px; border-bottom: 1px solid #e3e3e3; }
.modal header h2 { font-size: 17px; line-height: 24px; font-weight: 500; }
.modal header svg { width: 11px; height: 11px; stroke-width: 1.5; }
.modal-body { padding: 147px 10% 195px; background: #f8f8f8; border-bottom: 1px solid #dedede; }
.slogan { width: fit-content; margin: 0 auto 36px; font-size: 46px; line-height: 60px; font-weight: bold; color: transparent; background: linear-gradient(90deg, #c4daff, #cfd0ff); -webkit-background-clip: text; background-clip: text; }
.prompt { position: relative; display: flex; align-items: center; height: 94px; padding: 0 12px 0 7px; border: 1px solid #8f94ff; border-radius: 12px; background: linear-gradient(90deg, #e2f0ff, #dde3ff 50%, #d8d8ff); box-shadow: 0 4px 20px rgba(0, 0, 0, .1); }
.prompt .bot { width: 24px; height: 24px; }
.prompt textarea { flex: 1; height: 92px; margin-left: 18px; padding: 8px 0; border: 0; outline: 0; resize: none; background: none; }
.prompt textarea::placeholder { color: #98a3b7; opacity: 1; }
.prompt-acts { position: absolute; right: 4px; bottom: 3px; display: flex; gap: 5px; }
.prompt-acts button { width: 32px; height: 32px; border-radius: 50%; background: #fff; color: #333; }
.prompt-acts svg { width: 18px; height: 18px; }
.prompt-acts .send { background: #999; color: #ccc; }
.pills { display: flex; flex-wrap: wrap; justify-content: center; gap: 10px; margin: 10px 0 0; }
.pills button { height: 24px; padding: 0 10px; border: 1px solid #9b9dff; border-radius: 12px; color: #1a1a1a; }
.modal footer { display: flex; justify-content: flex-end; padding: 17px 33px 16px; }
.modal footer button { width: 61px; height: 34px; border-radius: 2px; background: #bbd5fc; color: #fff; }

/* call-out marks */
.mark { position: absolute; top: 228px; right: 0; width: 250px; height: 51px; border: 2px solid #f50000; border-right: 0; }
.arrow { position: absolute; top: 256px; right: 262px; width: 100px; height: 10px; stroke: none; }
.fab { position: absolute; top: 671px; right: 15px; width: 42px; height: 42px; border-radius: 50%; background: #fff; box-shadow: 0 6px 16px rgba(0, 0, 0, .3); }
.fab svg { width: 26px; height: 26px; }
```
